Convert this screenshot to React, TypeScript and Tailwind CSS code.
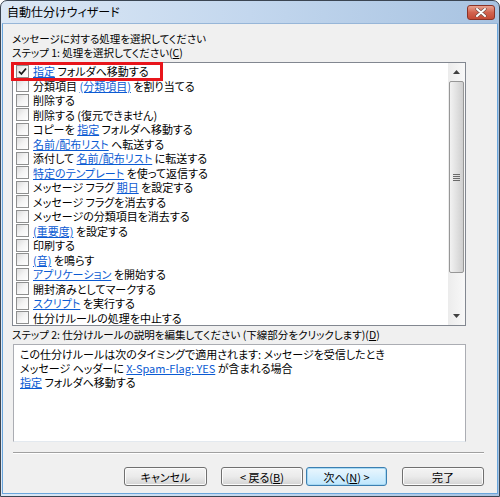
import React from "react";

const font = { fontFamily: "'Noto Sans CJK JP', 'Noto Sans', sans-serif" };

type Part = string | { link: string };

const actions: Part[][] = [
  [{ link: "指定" }, " フォルダへ移動する"],
  ["分類項目 ", { link: "(分類項目)" }, " を割り当てる"],
  ["削除する"],
  ["削除する (復元できません)"],
  ["コピーを ", { link: "指定" }, " フォルダへ移動する"],
  [{ link: "名前/配布リスト" }, " へ転送する"],
  ["添付して ", { link: "名前/配布リスト" }, " に転送する"],
  [{ link: "特定のテンプレート" }, " を使って返信する"],
  ["メッセージ フラグ ", { link: "期日" }, " を設定する"],
  ["メッセージ フラグを消去する"],
  ["メッセージの分類項目を消去する"],
  [{ link: "(重要度)" }, " を設定する"],
  ["印刷する"],
  [{ link: "(音)" }, " を鳴らす"],
  [{ link: "アプリケーション" }, " を開始する"],
  ["開封済みとしてマークする"],
  [{ link: "スクリプト" }, " を実行する"],
  ["仕分けルールの処理を中止する"],
];

function Parts({ parts }: { parts: Part[] }) {
  return (
    <>
      {parts.map((p, i) =>
        typeof p === "string" ? (
          <span key={i} className="whitespace-pre">{p}</span>
        ) : (
          <span key={i} className="text-[#0b5bd3] underline underline-offset-[1px]">{p.link}</span>
        )
      )}
    </>
  );
}

function Checkbox({ checked }: { checked?: boolean }) {
  return (
    <span className="w-[13px] h-[13px] shrink-0 border border-[#8e8f8f] bg-gradient-to-br from-[#dcdcdc] via-[#f4f4f4] to-white flex items-center justify-center">
      {checked && (
        <svg width="9" height="9" viewBox="0 0 9 9">
          <path d="M1 4.5 L3.4 7 L8 1.5" fill="none" stroke="#1a1a1a" strokeWidth="1.8" />
        </svg>
      )}
    </span>
  );
}

function Button({ children, focus }: { children: React.ReactNode; focus?: boolean }) {
  return (
    <div
      className={`h-[19px] rounded-[3px] border flex items-center justify-center text-[11px] text-black ${
        focus
          ? "border-[#3c7fb1] bg-gradient-to-b from-[#eaf6fd] to-[#bee6fd] shadow-[inset_0_0_0_1px_#a6d9f4]"
          : "border-[#707070] bg-gradient-to-b from-[#f4f4f4] via-[#ebebeb] to-[#d3d3d3] shadow-[inset_0_0_0_1px_#fcfcfc]"
      }`}
    >
      {children}
    </div>
  );
}

export default function App() {
  return (
    <div className="w-[500px] h-[497px] bg-white [font-feature-settings:'palt']" style={font}>
      <div className="w-full h-full rounded-t-[7px] border border-[#3b4552] bg-gradient-to-r from-[#dce8f5] via-[#c3d7ee] to-[#a8c3e1] flex flex-col">
        {/* タイトルバー */}
        <div className="h-[22px] shrink-0 flex items-center justify-between pl-[6px] pr-[4px]">
          <span className="text-[12px] text-black leading-none">自動仕分けウィザード</span>
          <div className="w-[28px] h-[15px] rounded-[3px] border border-[#8a3328] bg-gradient-to-b from-[#e8a290] via-[#d2634f] to-[#c44a35] flex items-center justify-center">
            <svg width="12" height="9" viewBox="0 0 12 9">
              <path d="M2 1 L10 8 M10 1 L2 8" stroke="#6b4a44" strokeWidth="3.2" strokeLinecap="round" />
              <path d="M2 1 L10 8 M10 1 L2 8" stroke="#ffffff" strokeWidth="2" strokeLinecap="round" />
            </svg>
          </div>
        </div>

        {/* 本体 */}
        <div className="flex-1 mx-[1px] mb-[2px] bg-[#f0f0f0] border border-[#6aa6dc] border-t-[#97b6d8] pt-[8px] pl-[9px] pr-[12px] flex flex-col text-[11px] text-black leading-[12px]">
          <div className="text-[10.5px] leading-[14px]">メッセージに対する処理を選択してください</div>
          <div className="text-[10.5px] leading-[14px]">
            ステップ 1: 処理を選択してください(<span className="underline">C</span>)
          </div>

          {/* 処理リスト */}
          <div className="relative mt-[2px] w-[454px] h-[264px] border border-[#828790] bg-white flex">
            <div className="flex-1 pt-[1px] pl-[3px] flex flex-col">
              {actions.map((a, i) => (
                <div key={i} className="h-[14.5px] flex items-center gap-[4px] whitespace-nowrap">
                  <Checkbox checked={i === 0} />
                  <span>
                    <Parts parts={a} />
                  </span>
                </div>
              ))}
            </div>
            {/* スクロールバー */}
            <div className="w-[17px] shrink-0 bg-gradient-to-r from-[#ececec] to-[#f8f8f8] flex flex-col items-center">
              <div className="h-[18px] w-full flex items-center justify-center">
                <svg width="7" height="4" viewBox="0 0 7 4">
                  <path d="M0 4 L3.5 0 L7 4 Z" fill="#404040" />
                </svg>
              </div>
              <div className="w-[15px] h-[192px] rounded-[2px] border border-[#979797] bg-gradient-to-r from-[#f2f2f2] via-[#e1e1e1] to-[#cfcfcf] flex flex-col items-center justify-center gap-[1px]">
                <span className="w-[7px] h-[1px] bg-[#6a6a6a]" />
                <span className="w-[7px] h-[1px] bg-[#6a6a6a]" />
                <span className="w-[7px] h-[1px] bg-[#6a6a6a]" />
                <span className="w-[7px] h-[1px] bg-[#6a6a6a]" />
              </div>
              <div className="flex-1" />
              <div className="h-[18px] w-full flex items-center justify-center">
                <svg width="7" height="4" viewBox="0 0 7 4">
                  <path d="M0 0 L3.5 4 L7 0 Z" fill="#404040" />
                </svg>
              </div>
            </div>
            {/* 強調枠 */}
            <div className="absolute left-[-2px] top-[-1px] w-[152px] h-[19px] border-[3px] border-[#e8151b] pointer-events-none" />
          </div>

          <div className="mt-[3px] text-[10.5px]">
            ステップ 2: 仕分けルールの説明を編集してください (下線部分をクリックします)(
            <span className="underline">D</span>)
          </div>

          {/* 説明欄 */}
          <div className="mt-[3px] ml-[1px] w-[453px] h-[98px] border border-[#abadb3] border-b-[#e3e9ef] bg-white pl-[6px] pt-[2px] leading-[14px]">
            <div>この仕分けルールは次のタイミングで適用されます: メッセージを受信したとき</div>
            <div>
              メッセージ ヘッダーに <span className="text-[#0b5bd3] underline">X-Spam-Flag: YES</span> が含まれる場合
            </div>
            <div>
              <span className="text-[#0b5bd3] underline">指定</span> フォルダへ移動する
            </div>
          </div>

          {/* 区切り線 */}
          <div className="mt-[10px] ml-[1px] mr-[1px] h-[2px] border-t border-[#a0a0a0] border-b border-b-white" />

          {/* ボタン */}
          <div className="mt-[13px] mr-[1px] flex justify-end">
            <div className="w-[83px]">
              <Button>キャンセル</Button>
            </div>
            <div className="w-[82px] ml-[14px]">
              <Button>
                &lt; 戻る(<span className="underline">B</span>)
              </Button>
            </div>
            <div className="w-[81px] ml-[3px]">
              <Button focus>
                次へ(<span className="underline">N</span>) &gt;
              </Button>
            </div>
            <div className="w-[82px] ml-[15px]">
              <Button>完了</Button>
            </div>
          </div>
        </div>
      </div>
    </div>
  );
}
